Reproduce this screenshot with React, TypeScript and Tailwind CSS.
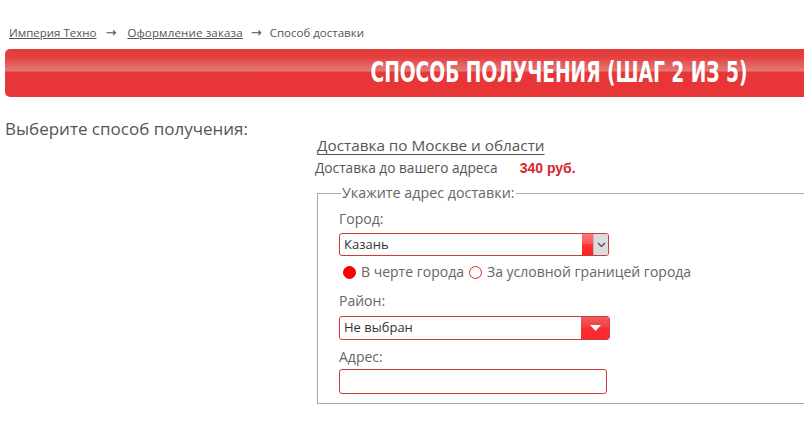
import React from "react";

export default function App() {
  return (
    <div className="w-[804px] h-[426px] overflow-hidden bg-white text-[#5b5b5b]" style={{ fontFamily: '"Open Sans", "Liberation Sans", sans-serif' }}>
      {/* breadcrumb */}
      <div className="pt-[25px] pl-[9px] flex items-center text-[11.5px] leading-[16px] text-[#555]">
        <a className="underline">Империя Техно</a>
        <span className="ml-[9px] mr-[11px] text-[13px]" style={{ fontFamily: '"DejaVu Sans", sans-serif' }}>→</span>
        <a className="underline tracking-[0.15px]">Оформление заказа</a>
        <span className="ml-[8px] mr-[8px] text-[13px]" style={{ fontFamily: '"DejaVu Sans", sans-serif' }}>→</span>
        <span>Способ доставки</span>
      </div>

      {/* banner */}
      <div className="mt-[8px] ml-[5px] h-[48px] rounded-l-[5px] flex items-center justify-end pr-[56px] bg-[linear-gradient(180deg,#e43a3c_0px,#e4403f_8px,#e07a78_22px,#e83638_23px,#e83638_100%)]">
        <span className="text-white font-bold text-[28px] leading-[32px] origin-right scale-x-[0.74] whitespace-nowrap" style={{ fontFamily: '"DejaVu Sans Condensed", "DejaVu Sans", sans-serif' }}>
          СПОСОБ ПОЛУЧЕНИЯ (ШАГ 2 ИЗ 5)
        </span>
      </div>

      {/* content */}
      <div className="flex">
        <div className="w-[315px] pl-[5px] pt-[22px] text-[17px] leading-[20px] text-[#555]">
          Выберите способ получения:
        </div>
        <div className="flex-1 pt-[38px]">
          <div className="pl-[2px] text-[15.3px] leading-[20px] text-[#555]">
            <span className="underline underline-offset-[3px]">Доставка по Москве и области</span>
          </div>
          <div className="mt-[4px] flex text-[13.7px] leading-[18px] text-[#555]">
            <span>Доставка до вашего адреса</span>
            <span className="ml-[22px] font-bold text-[#d8262b] text-[14px]" style={{ fontFamily: '"Liberation Sans", sans-serif' }}>340 руб.</span>
          </div>

          <fieldset className="mt-[7px] ml-[2px] border border-[#a8a8a8] border-r-0 pl-[21px] pb-[9px]">
            <legend className="ml-[2px] px-[1px] text-[14.3px] leading-[18px] text-[#666]">Укажите адрес доставки:</legend>

            <div className="mt-[8px] text-[14px] leading-[18px] text-[#666]">Город:</div>
            <div className="mt-[5px] w-[270px] h-[23px] border border-[#cb3c40] rounded-[3px] flex items-center overflow-hidden">
              <span className="flex-1 pl-[4px] text-[13px] text-[#333]">Казань</span>
              <div className="w-[11px] h-full bg-[linear-gradient(180deg,#f77_0%,#f55_45%,#f33_50%,#f22_100%)]" />
              <div className="w-[15px] h-full bg-[#dcdcdc] border-l border-[#bbb] flex items-center justify-center">
                <svg width="9" height="6" viewBox="0 0 9 6"><path d="M1 1l3.5 3.5L8 1" fill="none" stroke="#444" strokeWidth="1.1" /></svg>
              </div>
            </div>

            <div className="mt-[7px] flex items-center text-[14px] leading-[18px] text-[#666]">
              <span className="ml-[4px] w-[13px] h-[13px] rounded-full bg-[#f00] border border-[#e00]" />
              <span className="ml-[5px]">В черте города</span>
              <span className="ml-[5px] w-[13px] h-[13px] rounded-full border-[1.5px] border-[#e0262b]" />
              <span className="ml-[5px]">За условной границей города</span>
            </div>

            <div className="mt-[11px] text-[14px] leading-[18px] text-[#666]">Район:</div>
            <div className="mt-[6px] w-[271px] h-[24px] border border-[#cb3c40] rounded-[3px] flex items-center overflow-hidden">
              <span className="flex-1 pl-[4px] text-[13px] text-[#333]">Не выбран</span>
              <div className="w-[28px] h-full flex items-center justify-center bg-[linear-gradient(180deg,#f35a5c_0%,#ef3f42_45%,#ff2a2e_50%,#f52a2e_100%)]">
                <svg width="11" height="6" viewBox="0 0 11 6"><path d="M0 0h11L5.5 6z" fill="#fff" /></svg>
              </div>
            </div>

            <div className="mt-[8px] text-[14px] leading-[18px] text-[#666]">Адрес:</div>
            <div className="mt-[3px] w-[268px] h-[25px] border border-[#cb3c40] rounded-[3px]" />
          </fieldset>
        </div>
      </div>
    </div>
  );
}
